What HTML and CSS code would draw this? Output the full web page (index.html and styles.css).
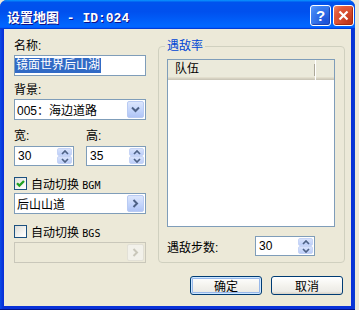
FILE: index.html
```html
<!DOCTYPE html>
<html lang="zh-CN">
<head>
  <meta charset="UTF-8" />
  <meta name="viewport" content="width=device-width, initial-scale=1.0"/>
  <title>设置地图</title>
  <link rel="stylesheet" href="styles.css">
</head>
<body>
  <div class="window">
    <div class="title-bar">
      <span class="title">设置地图 - ID:024</span>
      <div class="title-buttons">
        <button class="tb-btn help">?</button>
        <button class="tb-btn close">
          <svg width="11" height="11" viewBox="0 0 11 11"><path d="M1.5 1.5 L9.5 9.5 M9.5 1.5 L1.5 9.5" stroke="#fff" stroke-width="2.2" fill="none"/></svg>
        </button>
      </div>
    </div>

    <div class="client">
      <div class="main">
        <div class="left-col">
          <label class="lbl">名称:</label>
          <div class="textbox"><span class="sel">镜面世界后山湖</span></div>

          <label class="lbl gap">背景:</label>
          <div class="combo">
            <span class="value">005：海边道路</span>
            <span class="side-btn">
              <svg width="9" height="7" viewBox="0 0 9 7"><path d="M1 1.5 L4.5 5 L8 1.5" stroke="#4D6185" stroke-width="2" fill="none"/></svg>
            </span>
          </div>

          <div class="size-row">
            <div class="size-field">
              <label class="lbl">宽:</label>
              <div class="spin">
                <span class="value">30</span>
                <span class="spin-btns">
                  <span class="spin-btn"><svg width="8" height="5" viewBox="0 0 8 5"><path d="M1 4 L4 1 L7 4" stroke="#4D6185" stroke-width="1.7" fill="none"/></svg></span>
                  <span class="spin-btn"><svg width="8" height="5" viewBox="0 0 8 5"><path d="M1 1 L4 4 L7 1" stroke="#4D6185" stroke-width="1.7" fill="none"/></svg></span>
                </span>
              </div>
            </div>
            <div class="size-field">
              <label class="lbl">高:</label>
              <div class="spin">
                <span class="value">35</span>
                <span class="spin-btns">
                  <span class="spin-btn"><svg width="8" height="5" viewBox="0 0 8 5"><path d="M1 4 L4 1 L7 4" stroke="#4D6185" stroke-width="1.7" fill="none"/></svg></span>
                  <span class="spin-btn"><svg width="8" height="5" viewBox="0 0 8 5"><path d="M1 1 L4 4 L7 1" stroke="#4D6185" stroke-width="1.7" fill="none"/></svg></span>
                </span>
              </div>
            </div>
          </div>

          <div class="check-row">
            <span class="checkbox">
              <svg width="9" height="9" viewBox="0 0 9 9"><path d="M1 4.2 L3.4 6.6 L8 2" stroke="#21A121" stroke-width="2.3" fill="none"/></svg>
            </span>
            <span>自动切换 <span class="mono">BGM</span></span>
          </div>
          <div class="picker">
            <span class="value">后山山道</span>
            <span class="side-btn">
              <svg width="7" height="9" viewBox="0 0 7 9"><path d="M1.5 1 L5 4.5 L1.5 8" stroke="#4D6185" stroke-width="2" fill="none"/></svg>
            </span>
          </div>

          <div class="check-row second">
            <span class="checkbox"></span>
            <span>自动切换 <span class="mono">BGS</span></span>
          </div>
          <div class="picker disabled">
            <span class="value"></span>
            <span class="side-btn">
              <svg width="7" height="9" viewBox="0 0 7 9"><path d="M1.5 1 L5 4.5 L1.5 8" stroke="#C9C7BA" stroke-width="2" fill="none"/></svg>
            </span>
          </div>
        </div>

        <fieldset class="group">
          <legend>遇敌率</legend>
          <div class="listview">
            <div class="lv-header">
              <div class="lv-col">队伍</div>
            </div>
          </div>
          <div class="steps-row">
            <span class="steps-label">遇敌步数:</span>
            <div class="spin">
              <span class="value">30</span>
              <span class="spin-btns">
                <span class="spin-btn"><svg width="8" height="5" viewBox="0 0 8 5"><path d="M1 4 L4 1 L7 4" stroke="#4D6185" stroke-width="1.7" fill="none"/></svg></span>
                <span class="spin-btn"><svg width="8" height="5" viewBox="0 0 8 5"><path d="M1 1 L4 4 L7 1" stroke="#4D6185" stroke-width="1.7" fill="none"/></svg></span>
              </span>
            </div>
          </div>
        </fieldset>
      </div>

      <div class="actions">
        <button class="btn default">确定</button>
        <button class="btn">取消</button>
      </div>
    </div>
  </div>
</body>
</html>
```

FILE: styles.css
```css
* {
  box-sizing: border-box;
}

body {
  margin: 0;
  padding: 0;
  background: #ECE9D8;
  font-family: "Liberation Sans", "Noto Sans CJK SC", sans-serif;
  font-size: 12px;
  color: #000;
}

.window {
  width: 355px;
  height: 310px;
  display: flex;
  flex-direction: column;
  background: linear-gradient(to right, #0A4BE6, #0831D9 3px, #0831D9 calc(100% - 3px), #0A3FD0);
  border-radius: 7px 7px 0 0;
  box-shadow: inset 0 -1px 0 #00138C;
  overflow: hidden;
}

.title-bar {
  height: 29px;
  flex-shrink: 0;
  display: flex;
  align-items: center;
  justify-content: space-between;
  padding: 1px 1px 0 7px;
  background: linear-gradient(to bottom, #0997FF 0%, #0053EE 8%, #0050EE 40%, #0066FF 88%, #0066FF 93%, #005BFF 95%, #003DD7 96%, #003DD7 100%);
}

.title {
  color: #fff;
  font-family: "Liberation Mono", "Noto Sans CJK SC", monospace;
  font-weight: bold;
  font-size: 13px;
  padding-top: 2px;
  text-shadow: 1px 1px 0 #0F1089;
}

.title-buttons {
  display: flex;
  gap: 2px;
}

.tb-btn {
  width: 21px;
  height: 21px;
  padding: 0;
  border: 1px solid #fff;
  border-radius: 3px;
  display: flex;
  align-items: center;
  justify-content: center;
  color: #fff;
  font-family: "Liberation Sans", sans-serif;
  font-weight: bold;
  font-size: 15px;
}

.tb-btn.help {
  background: radial-gradient(circle at 80% 80%, #1B50D8, #3C7FF0 70%, #5C9BFF);
  box-shadow: inset -1px -1px 1px #1A3FB0;
}

.tb-btn.close {
  background: radial-gradient(circle at 80% 80%, #C1361A, #E2593A 70%, #F08A6A);
  box-shadow: inset -1px -1px 1px #A12A10;
}

.client {
  flex: 1;
  margin: 0 4px 4px;
  background: #ECE9D8;
  padding: 10px 6px 0 10px;
}

.main {
  display: grid;
  grid-template-columns: 132px 187px;
  column-gap: 12px;
  align-items: start;
}

.left-col {
  display: flex;
  flex-direction: column;
}

.lbl {
  display: block;
  line-height: 14px;
  margin-bottom: 2px;
}

.lbl.gap {
  margin-top: 7px;
}

.textbox,
.combo,
.picker,
.spin {
  display: flex;
  align-items: center;
  background: #fff;
  border: 1px solid #7F9DB9;
}

.textbox {
  height: 21px;
  padding-left: 0;
}

.sel {
  background: #316AC5;
  color: #fff;
  line-height: 15px;
  padding: 0 1px;
}

.combo,
.picker {
  height: 21px;
  padding: 1px;
}

.value {
  flex: 1;
  padding-left: 1px;
  white-space: nowrap;
}

.side-btn {
  width: 17px;
  height: 100%;
  display: flex;
  align-items: center;
  justify-content: center;
  border: 1px solid #B9CBF3;
  border-radius: 2px;
  background: linear-gradient(to bottom, #DCE6FC, #C1D3FB 60%, #B0C4F5);
}

.size-row {
  display: flex;
  gap: 12px;
  margin-top: 9px;
}

.size-field {
  width: 60px;
}

.size-field .lbl {
  margin-bottom: 3px;
}

.spin {
  width: 60px;
  height: 20px;
  padding: 1px;
}

.spin .value {
  padding-left: 2px;
}

.spin-btns {
  width: 15px;
  height: 100%;
  display: flex;
  flex-direction: column;
}

.spin-btn {
  flex: 1;
  display: flex;
  align-items: center;
  justify-content: center;
  border: 1px solid #C6D4F6;
  border-radius: 2px;
  background: linear-gradient(to bottom, #D8E3FC, #BCCEF8);
}

.check-row {
  display: flex;
  align-items: center;
  gap: 4px;
  height: 14px;
  margin-top: 10px;
}

.check-row.second {
  margin-top: 10px;
}

.checkbox {
  width: 13px;
  height: 13px;
  border: 1px solid #1C5180;
  background: linear-gradient(135deg, #DCDCD7, #F8F8F6 70%, #fff);
  display: flex;
  align-items: center;
  justify-content: center;
}

.mono {
  font-family: "DejaVu Sans Mono", monospace;
  font-size: 10px;
}

.picker {
  margin-top: 3px;
}

.picker.disabled {
  margin-top: 4px;
  border-color: #C9C7BA;
  background: #ECE9D8;
}

.picker.disabled .side-btn {
  border-color: #E2E0D6;
  background: #F2F1EA;
}

.group {
  margin: 0;
  padding: 0 9px 6px 8px;
  border: 1px solid #D0D0BF;
  border-radius: 4px;
  min-width: 0;
}

.group legend {
  padding: 0 2px;
  margin-left: -2px;
  color: #0046D5;
  line-height: 14px;
}

.listview {
  margin-top: 6px;
  height: 168px;
  background: #fff;
  border: 1px solid #7F9DB9;
}

.lv-header {
  height: 20px;
  background: #EBEADB;
  box-shadow: inset 0 -1px 0 #CBC7B8, inset 0 -2px 0 #D6D2C2, inset 0 -3px 0 #E2DECD;
  display: flex;
}

.lv-col {
  width: 148px;
  padding-left: 7px;
  line-height: 18px;
  border-right: 1px solid #fff;
  position: relative;
}

.lv-col::after {
  content: "";
  position: absolute;
  right: 0;
  top: 4px;
  bottom: 4px;
  width: 1px;
  background: #ACA899;
}

.steps-row {
  display: flex;
  align-items: center;
  margin-top: 9px;
}

.steps-label {
  width: 88px;
}

.actions {
  display: flex;
  justify-content: flex-end;
  gap: 9px;
  margin-top: 13px;
  padding-right: 2px;
}

.btn {
  width: 72px;
  height: 19px;
  padding: 0;
  border: 1px solid #003C74;
  border-radius: 3px;
  background: linear-gradient(to bottom, #FFFFFF, #F4F3EE 50%, #ECEBE6 85%, #D6D0C5);
  font-family: "Liberation Sans", "Noto Sans CJK SC", sans-serif;
  font-size: 12px;
  color: #000;
}

.btn.default {
  box-shadow: inset 0 0 0 1px #CEE7FF, inset 0 0 0 2px #98B8EA;
}
```
